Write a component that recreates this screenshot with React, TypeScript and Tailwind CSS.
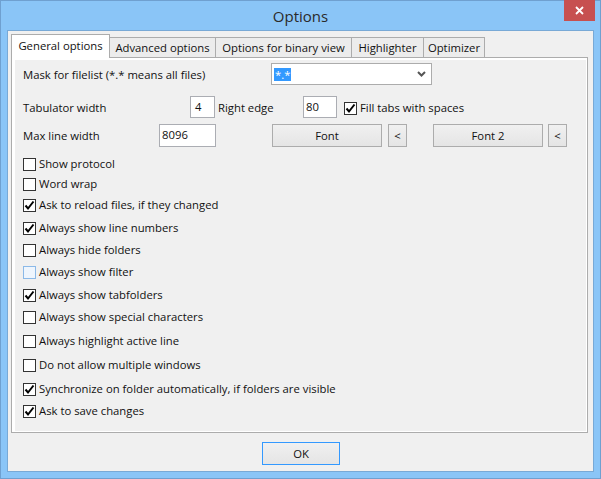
import React from 'react';

const checks: { label: string; checked?: boolean; hover?: boolean; h: string }[] = [
  { label: 'Show protocol', h: 'h-[20px]' },
  { label: 'Word wrap', h: 'h-[20px]' },
  { label: 'Ask to reload files, if they changed', checked: true, h: 'h-[22px]' },
  { label: 'Always show line numbers', checked: true, h: 'h-[24px]' },
  { label: 'Always hide folders', h: 'h-[20px]' },
  { label: 'Always show filter', hover: true, h: 'h-[24px]' },
  { label: 'Always show tabfolders', checked: true, h: 'h-[22px]' },
  { label: 'Always show special characters', h: 'h-[22px]' },
  { label: 'Always highlight active line', h: 'h-[26px]' },
  { label: 'Do not allow multiple windows', h: 'h-[22px]' },
  { label: 'Synchronize on folder automatically, if folders are visible', checked: true, h: 'h-[26px]' },
  { label: 'Ask to save changes', checked: true, h: 'h-[18px]' },
];

function Box({ checked, hover }: { checked?: boolean; hover?: boolean }) {
  return (
    <span
      className={
        'w-[13px] h-[13px] border flex items-center justify-center shrink-0 ' +
        (hover ? 'border-[#8bb9e8] bg-[#eef5fd]' : 'border-[#333333] bg-white')
      }
    >
      {checked && (
        <svg width="11" height="11" viewBox="0 0 11 11">
          <path d="M1.5 5.5 L4 8.5 L9.5 1.5" fill="none" stroke="#000" strokeWidth="2" />
        </svg>
      )}
    </span>
  );
}

function Btn({ w, children }: { w: string; children: React.ReactNode }) {
  return (
    <div className={w + ' h-[23px] border border-[#acacac] bg-gradient-to-b from-[#f0f0f0] to-[#e5e5e5] flex items-center justify-center shrink-0 pt-px'}>
      {children}
    </div>
  );
}

export default function App() {
  return (
    <div className="w-[601px] h-[479px] bg-[#8ac5f7] border border-[#6fa0d0] flex flex-col font-['Open_Sans',sans-serif] text-[11.3px] text-[#111]">
      {/* Title bar */}
      <div className="relative h-[29px] flex items-center justify-center">
        <span className="text-[15px] text-[#2a2a2a] mt-[2px]">Options</span>
        <div className="absolute right-[5px] -top-px w-[31px] h-[21px] bg-[#c75050] flex items-center justify-center">
          <svg width="9" height="9" viewBox="0 0 9 9">
            <path d="M1 1 L8 8 M8 1 L1 8" stroke="#fff" strokeWidth="1.8" />
          </svg>
        </div>
      </div>

      {/* Client */}
      <div className="mx-[6px] h-[442px] border border-[#78a9d6] bg-[#f0f0f0] pl-[3px] pr-[5px] pt-[3px] flex flex-col">
        {/* Tabs */}
        <div className="flex items-end h-[23px]">
          <div className="relative z-10 w-[99px] h-[24px] -mb-px bg-white border-l border-t border-r border-[#acacac] flex items-center justify-center pb-px">
            General options
          </div>
          <div className="w-[107px] h-[20px] -ml-px bg-[#ececec] border-l border-t border-r border-[#acacac] flex items-center justify-center pt-px">
            Advanced options
          </div>
          <div className="w-[137px] h-[20px] -ml-px bg-[#ececec] border-l border-t border-r border-[#acacac] flex items-center justify-center pt-px">
            Options for binary view
          </div>
          <div className="w-[73px] h-[20px] -ml-px bg-[#ececec] border-l border-t border-r border-[#acacac] flex items-center justify-center pt-px">
            Highlighter
          </div>
          <div className="w-[62px] h-[20px] -ml-px bg-[#ececec] border-l border-t border-r border-[#acacac] flex items-center justify-center pt-px">
            Optimizer
          </div>
        </div>

        {/* Panel */}
        <div className="h-[376px] border border-[#acacac] bg-white pl-[3px] pt-[2px] pr-px pb-px">
          <div className="h-full bg-[#f0f0f0] pl-[8px] pt-[3px] flex flex-col">
            <div className="flex items-center h-[22px]">
              <span className="w-[248px] pt-[2px]">Mask for filelist (*.* means all files)</span>
              <div className="w-[161px] h-[22px] bg-white border border-[#acacac] flex items-center pl-[2px] pr-[5px]">
                <span className="bg-[#3399ff] text-white h-[13px] leading-[13px] px-px">*.*</span>
                <svg className="ml-auto" width="9" height="6" viewBox="0 0 9 6">
                  <path d="M1 1 L4.5 4.5 L8 1" fill="none" stroke="#555" strokeWidth="2" />
                </svg>
              </div>
            </div>

            <div className="flex items-center h-[22px] mt-[11px]">
              <span className="w-[167px] pt-[2px]">Tabulator width</span>
              <div className="w-[25px] h-[22px] bg-white border border-[#abadb3] pl-[4px] flex items-center">4</div>
              <span className="ml-[3px] w-[85px] pt-[2px]">Right edge</span>
              <div className="w-[34px] h-[22px] bg-white border border-[#abadb3] pl-[2px] flex items-center">80</div>
              <span className="ml-[7px] flex items-center pt-[3px]">
                <Box checked />
              </span>
              <span className="ml-[3px] pt-[2px]">Fill tabs with spaces</span>
            </div>

            <div className="flex items-center h-[23px] mt-[6px]">
              <span className="w-[136px] pt-[2px]">Max line width</span>
              <div className="w-[57px] h-[23px] bg-white border border-[#abadb3] pl-[2px] flex items-center">8096</div>
              <div className="ml-[56px]">
                <Btn w="w-[110px]">Font</Btn>
              </div>
              <div className="ml-[6px]">
                <Btn w="w-[19px]">&lt;</Btn>
              </div>
              <div className="ml-[26px]">
                <Btn w="w-[110px]">Font 2</Btn>
              </div>
              <div className="ml-[5px]">
                <Btn w="w-[19px]">&lt;</Btn>
              </div>
            </div>

            <div className="flex flex-col mt-[7px]">
              {checks.map(c => (
                <div key={c.label} className={c.h + ' flex items-center'}>
                  <Box checked={c.checked} hover={c.hover} />
                  <span className="ml-[3px] pt-px">{c.label}</span>
                </div>
              ))}
            </div>
          </div>
        </div>

        {/* OK */}
        <div className="mt-[9px] ml-[251px]">
          <div className="w-[78px] h-[23px] border border-[#3399ff] bg-gradient-to-b from-[#f0f0f0] to-[#e5e5e5] flex items-center justify-center pt-px">
            OK
          </div>
        </div>
      </div>
    </div>
  );
}
